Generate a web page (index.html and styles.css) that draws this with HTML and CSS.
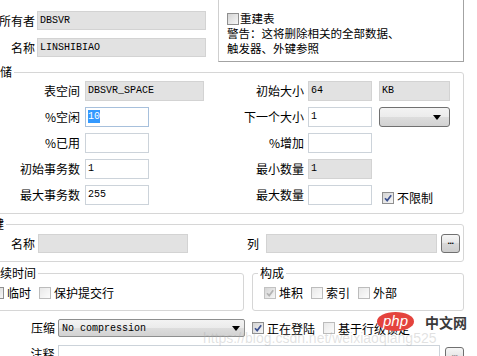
FILE: index.html
```html
<!DOCTYPE html>
<html lang="zh-CN">

<head>
    <meta charset="UTF-8">
    <title>表属性</title>
    <link rel="stylesheet" href="styles.css">
</head>

<body>
    <div class="dialog">
        <!-- 所有者 / 名称 + 警告框 -->
        <div class="top">
            <div class="owner">
                <div class="row">
                    <span class="lbl">所有者</span>
                    <div class="field ro name">DBSVR</div>
                </div>
                <div class="row">
                    <span class="lbl">名称</span>
                    <div class="field ro name">LINSHIBIAO</div>
                </div>
            </div>
            <div class="notice">
                <div class="line"><span class="cb"></span>重建表</div>
                <div class="line">警告：这将删除相关的全部数据、</div>
                <div class="line">触发器、外键参照</div>
            </div>
        </div>

        <!-- 存储 -->
        <fieldset class="group storage">
            <legend>存储</legend>
            <div class="grid">
                <span class="lbl">表空间</span>
                <div class="field ro wide">DBSVR_SPACE</div>
                <span class="lbl">初始大小</span>
                <div class="field ro">64</div>
                <div class="field ro unit">KB</div>

                <span class="lbl">%空闲</span>
                <div class="field focus"><span class="sel">10</span></div>
                <span class="lbl">下一个大小</span>
                <div class="field">1</div>
                <div class="combo unit"><span class="arrow"></span></div>

                <span class="lbl">%已用</span>
                <div class="field"></div>
                <span class="lbl">%增加</span>
                <div class="field"></div>
                <span></span>

                <span class="lbl">初始事务数</span>
                <div class="field">1</div>
                <span class="lbl">最小数量</span>
                <div class="field ro">1</div>
                <span></span>

                <span class="lbl">最大事务数</span>
                <div class="field">255</div>
                <span class="lbl">最大数量</span>
                <div class="field"></div>
                <span class="check limit"><span class="cb on"><svg viewBox="0 0 10 10"><path d="M2 5.2 L4.2 7.6 L8.2 2.2" /></svg></span>不限制</span>
            </div>
        </fieldset>

        <!-- 主键 -->
        <fieldset class="group key">
            <legend>主键</legend>
            <div class="row">
                <span class="lbl">名称</span>
                <div class="field ro keyname"></div>
                <span class="lbl col">列</span>
                <div class="field ro cols"></div>
                <span class="dots">...</span>
            </div>
        </fieldset>

        <!-- 持续时间 / 构成 -->
        <div class="pair">
            <fieldset class="group dur">
                <legend>持续时间</legend>
                <div class="checks">
                    <span class="check"><span class="cb"></span>临时</span>
                    <span class="check"><span class="cb off"></span>保护提交行</span>
                </div>
            </fieldset>
            <fieldset class="group comp">
                <legend>构成</legend>
                <div class="checks">
                    <span class="check"><span class="cb on dis"><svg viewBox="0 0 10 10"><path d="M2 5.2 L4.2 7.6 L8.2 2.2" /></svg></span>堆积</span>
                    <span class="check"><span class="cb off"></span>索引</span>
                    <span class="check"><span class="cb off"></span>外部</span>
                </div>
            </fieldset>
        </div>

        <!-- 压缩 / 注释 -->
        <div class="row bottom">
            <span class="lbl">压缩</span>
            <div class="combo press"><span class="val">No compression</span><span class="arrow"></span></div>
            <span class="check logging"><span class="cb on"><svg viewBox="0 0 10 10"><path d="M2 5.2 L4.2 7.6 L8.2 2.2" /></svg></span>正在登陆</span>
            <span class="check lock"><span class="cb off"></span>基于行级锁定</span>
        </div>
        <div class="row bottom">
            <span class="lbl">注释</span>
            <div class="field memo"></div>
            <span class="dots">...</span>
        </div>
    </div>

    <!-- 水印 -->
    <div class="wm-url">https://blog.csdn.net/weixiaoqiang525</div>
    <div class="wm-logo">php</div>
    <div class="wm-cn">中文网</div>
</body>

</html>
```

FILE: styles.css
```css
* {
    box-sizing: border-box;
}

html,
body {
    margin: 0;
    padding: 0;
}

body {
    width: 477px;
    height: 356px;
    overflow: hidden;
    position: relative;
    background: #fff;
    color: #000;
    font-family: "Noto Sans CJK SC", sans-serif;
    font-size: 12px;
}

/* 对话框被截掉左边一块 */
.dialog {
    margin-left: -20px;
    width: 484px;
}

.row {
    display: flex;
    align-items: center;
    height: 19px;
}

.lbl {
    text-align: right;
    white-space: nowrap;
    line-height: 14px;
}

/* 输入框 */
.field {
    height: 20px;
    border: 1px solid #ccd3da;
    background: #fff;
    font-family: "Liberation Mono", monospace;
    font-size: 10px;
    line-height: 18px;
    padding: 0 2px;
    white-space: nowrap;
    overflow: hidden;
}

.field.ro {
    background: #e2e2e2;
    border-color: #d3d3d3;
}

.field.focus {
    border-color: #a7c0dc;
}

.sel {
    background: #3399ff;
    color: #fff;
    padding: 1px 0;
}

.combo {
    height: 20px;
    border: 1px solid #707070;
    border-radius: 3px;
    background: linear-gradient(#f3f3f3, #ebebeb 50%, #dddddd 50%, #d2d2d2);
    display: flex;
    align-items: center;
    justify-content: flex-end;
    padding-right: 8px;
}

.arrow {
    width: 0;
    height: 0;
    border-left: 4px solid transparent;
    border-right: 4px solid transparent;
    border-top: 5px solid #000;
}

.dots {
    width: 19px;
    height: 19px;
    margin-left: 4px;
    border: 1px solid #707070;
    border-radius: 3px;
    background: linear-gradient(#f6f6f6, #e6e6e6 50%, #d8d8d8 50%, #cdcdcd);
    font-family: "Liberation Sans", sans-serif;
    font-weight: bold;
    font-size: 9px;
    line-height: 12px;
    text-align: center;
    letter-spacing: -0.5px;
}

/* 复选框 */
.check {
    display: inline-flex;
    align-items: center;
    gap: 3px;
    line-height: 15px;
    white-space: nowrap;
}

.cb {
    display: inline-block;
    flex: none;
    width: 12px;
    height: 12px;
    border: 1px solid #8f8f8f;
    background: linear-gradient(135deg, #d4d4d4, #f7f7f7);
}

.cb.off {
    border-color: #bcbcbc;
    background: linear-gradient(135deg, #e8e8e8, #fcfcfc);
}

.cb svg {
    display: block;
    width: 10px;
    height: 10px;
}

.cb svg path {
    fill: none;
    stroke: #3d5291;
    stroke-width: 1.7;
}

.cb.dis {
    border-color: #c2c2c2;
}

.cb.dis svg path {
    stroke: #b3b3b3;
}

/* 顶部 */
.top {
    display: flex;
    align-items: flex-start;
}

.owner {
    display: flex;
    flex-direction: column;
    gap: 8px;
    padding-top: 11px;
}

.owner .lbl {
    width: 57px;
    padding-right: 2px;
}

.owner .field {
    height: 19px;
    line-height: 17px;
}

.name {
    width: 169px;
}

.notice {
    margin-top: -10px;
    margin-left: 12px;
    width: 246px;
    padding: 20px 6px 5px 8px;
    border: 1px solid #a3a3a3;
    border-left-color: #cfcfcf;
    font-size: 11.5px;
    line-height: 15px;
}

.notice .line {
    display: flex;
    align-items: center;
    height: 15px;
    white-space: nowrap;
}

.notice .cb {
    margin-right: 1px;
}

/* 分组框 */
.group {
    margin: 0;
    padding: 0;
    border: 1px solid #d6d6d6;
    border-radius: 3px;
    min-width: 0;
}

.group legend {
    padding: 0 2px;
    margin-left: 5px;
    line-height: 14px;
}

.storage {
    margin-top: 3px;
    width: 484px;
    padding: 2px 0 8px;
}

.grid {
    display: grid;
    grid-template-columns: 104px 119px 104px 64px 78px;
    grid-auto-rows: 20px;
    row-gap: 6px;
    align-items: center;
}

.grid .lbl:nth-child(5n+1) {
    padding-right: 5px;
}

.grid .lbl {
    padding-right: 4px;
}

.grid .field {
    width: 64px;
}

.grid .field.wide {
    width: 119px;
}

.grid .unit {
    margin-left: 7px;
    width: 71px;
}

.limit {
    align-self: end;
    margin-left: 10px;
}

.key {
    margin-top: 3px;
    width: 484px;
    padding: 3px 0 8px;
}

.key legend {
    margin-left: -3px;
}

.key .lbl {
    width: 57px;
    padding-right: 3px;
}

.key .field {
    height: 19px;
}

.keyname {
    width: 150px;
}

.key .lbl.col {
    width: 78px;
    padding-right: 7px;
}

.cols {
    width: 171px;
}

.pair {
    display: flex;
    gap: 8px;
    margin-top: 4px;
}

.dur {
    width: 264px;
    padding: 5px 0 10px 11px;
}

.comp {
    width: 212px;
    padding: 5px 0 10px 11px;
}

.dur legend,
.comp legend {
    margin-left: -6px;
}

.checks {
    display: flex;
    height: 15px;
    gap: 8px;
}

/* 底部 */
.bottom {
    margin-top: 8px;
    height: 18px;
}

.bottom .lbl {
    width: 78px;
    padding-right: 3px;
}

.press {
    width: 187px;
    height: 18px;
    border-color: #8e8f8f;
    border-radius: 2px;
    padding: 0 4px 0 3px;
    justify-content: space-between;
}

.press .val {
    font-family: "Liberation Mono", monospace;
    font-size: 10px;
}

.logging {
    margin-left: 7px;
}

.lock {
    margin-left: 8px;
}

.memo {
    width: 385px;
    height: 19px;
}

.bottom .dots {
    margin-left: 5px;
    align-self: flex-start;
    margin-top: 2px;
}

/* 水印 */
.wm-logo {
    position: absolute;
    left: 377px;
    top: 312px;
    width: 37px;
    height: 19px;
    border-radius: 50%;
    background: #e4433d;
    color: #fff;
    font-family: "Liberation Sans", sans-serif;
    font-style: italic;
    font-size: 15px;
    line-height: 18px;
    text-align: center;
}

.wm-cn {
    position: absolute;
    left: 425px;
    top: 312px;
    font-size: 14px;
    font-weight: bold;
    line-height: 20px;
    color: #3a3a3a;
}

.wm-url {
    position: absolute;
    left: 203px;
    top: 330px;
    font-family: "Liberation Sans", sans-serif;
    font-size: 14px;
    color: rgba(170, 170, 170, 0.35);
    white-space: nowrap;
}
```
